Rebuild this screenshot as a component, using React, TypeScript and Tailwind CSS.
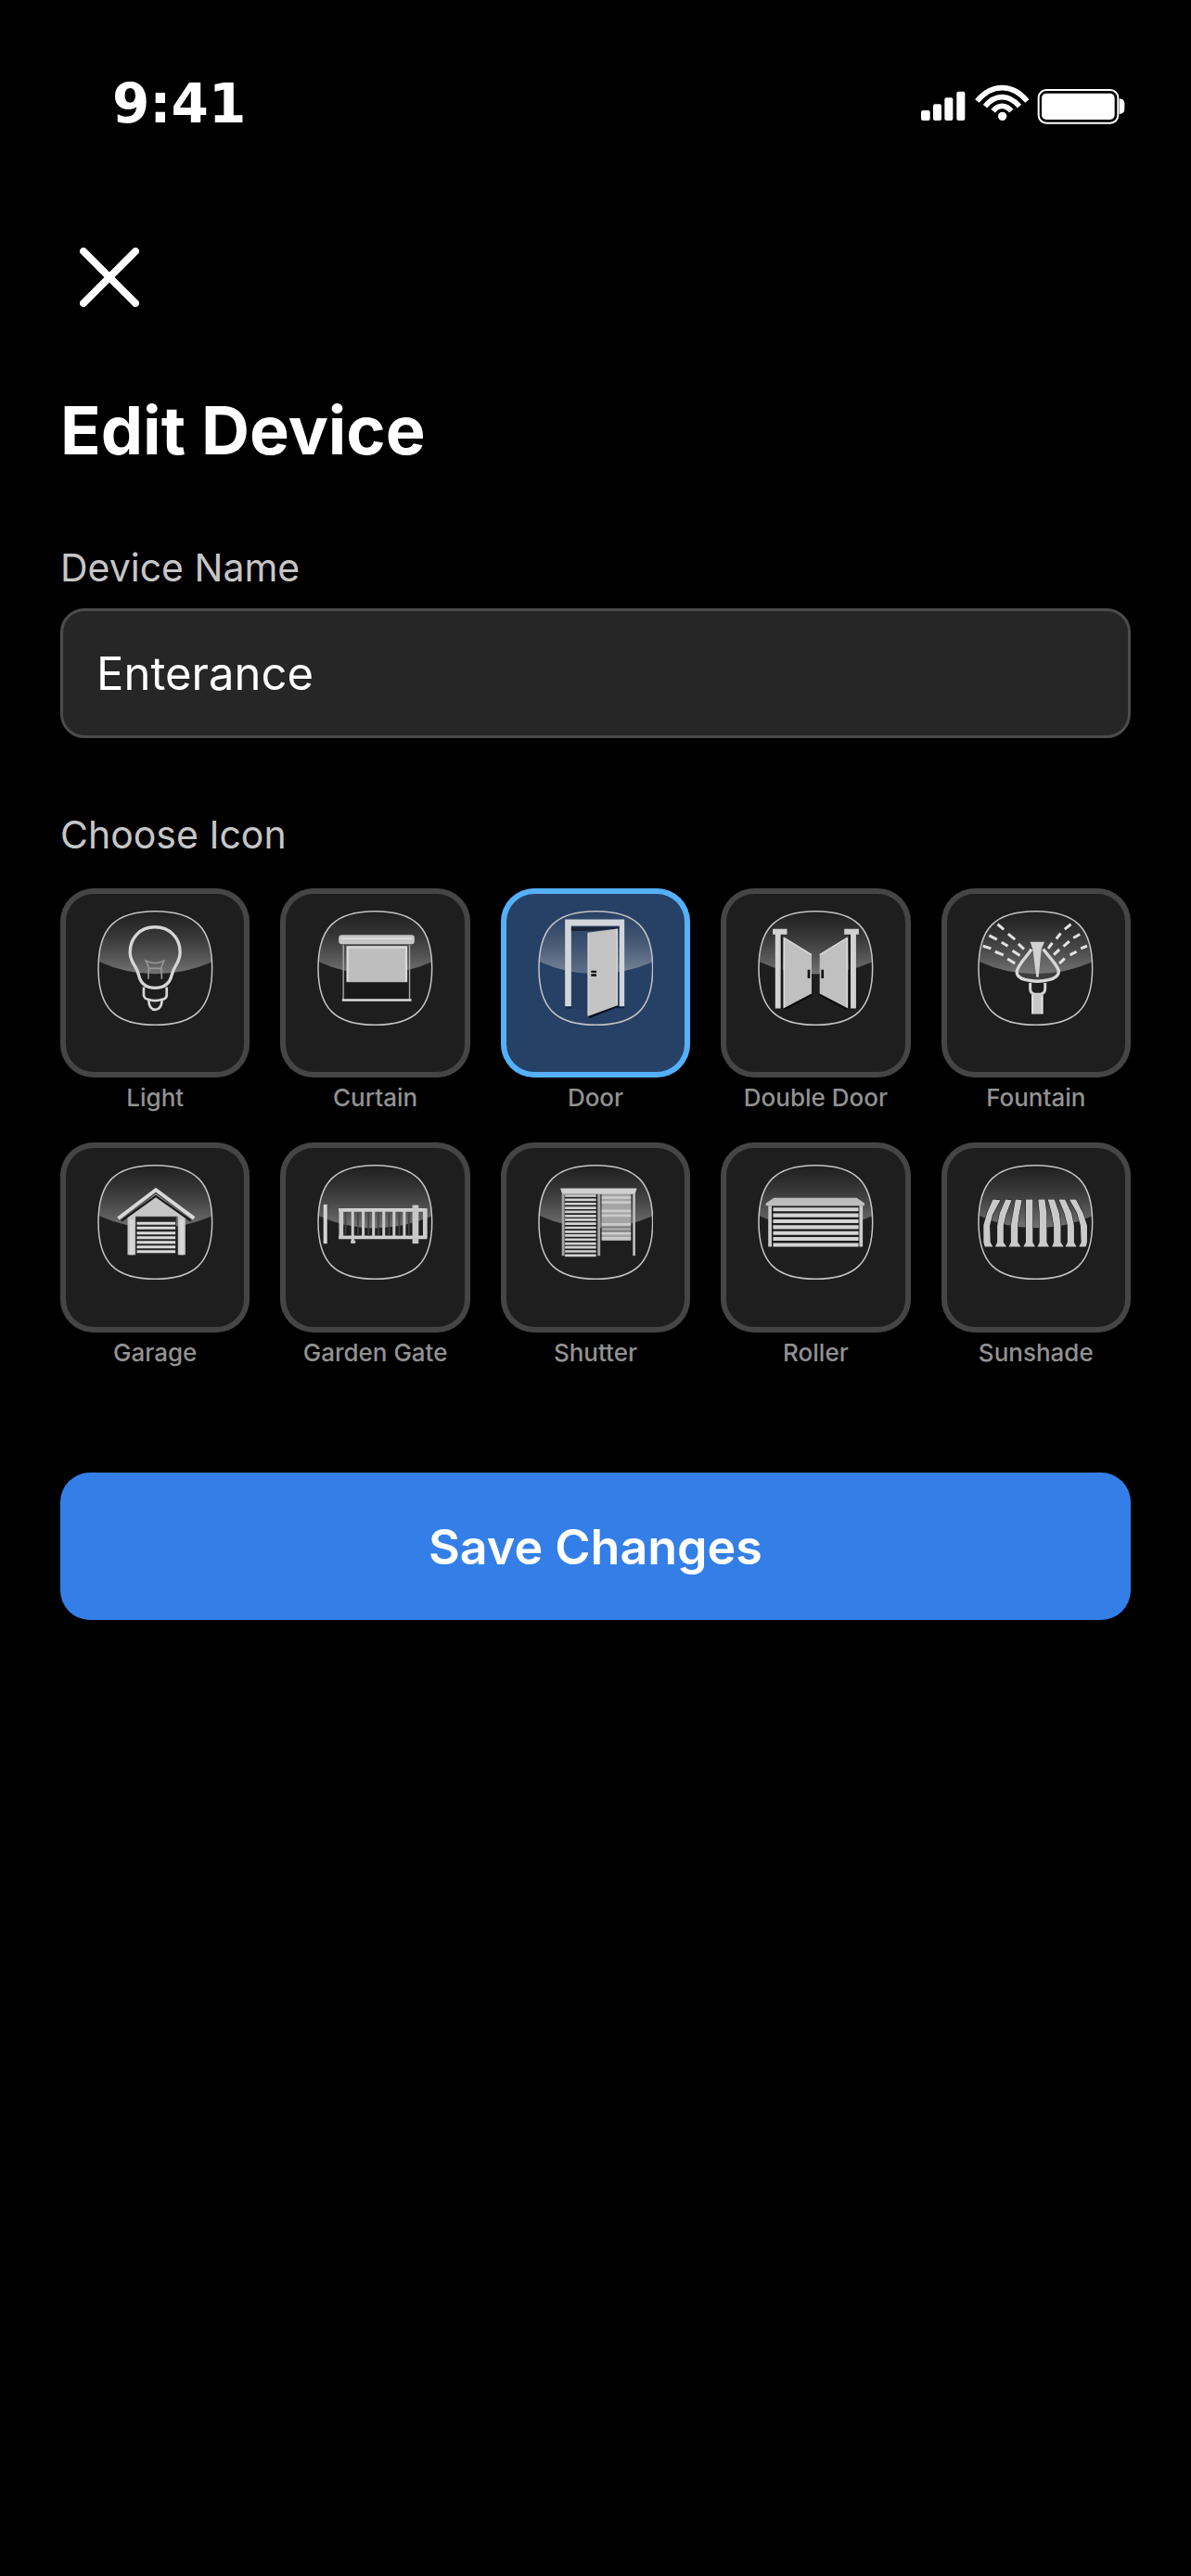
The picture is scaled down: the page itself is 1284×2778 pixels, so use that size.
import { useId, useState } from "react";
import type { ReactNode } from "react";

const SQUIRCLE =
  "M321 96C450 96 504 150 504 279S450 462 321 462S138 408 138 279S192 96 321 96Z";

function Glass({ children }: { children: ReactNode }) {
  const id = useId();
  return (
    <svg viewBox="135 91 372 376" className="w-[61%] shrink-0" aria-hidden="true">
      <defs>
        <linearGradient id={`${id}g`} x1="0" y1="0" x2="0" y2="1">
          <stop offset="0" stopColor="#000" stopOpacity="0.1" />
          <stop offset="0.15" stopColor="#888" stopOpacity="0.08" />
          <stop offset="1" stopColor="#ddd" stopOpacity="0.45" />
        </linearGradient>
        <clipPath id={`${id}c`}>
          <path d={SQUIRCLE} />
        </clipPath>
      </defs>
      <path
        d="M130 90H512V256Q420 298 321 298T130 254Z"
        fill={`url(#${id}g)`}
        clipPath={`url(#${id}c)`}
      />
      <path d={SQUIRCLE} fill="none" stroke="#c4c4c4" strokeWidth="4.5" />
      {children}
    </svg>
  );
}

function LightIcon() {
  return (
    <Glass>
      <g fill="none" stroke="#d6d6d6" strokeLinejoin="round">
        <path
          strokeWidth="10"
          d="M320 147C272 147 240 182 240 228C240 262 262 272 268 302C274 328 290 343 320 343S368 328 374 302C380 272 401 262 401 228C401 182 368 147 320 147Z"
        />
        <path strokeWidth="8" d="M284 340V366Q286 378 298 380Q320 388 344 380Q357 378 358 366V340" />
        <path strokeWidth="8" d="M300 384Q302 413 321 413T343 384" />
      </g>
      <path
        d="M299 314L300 276L291 256Q320 270 349 256L341 276L342 314M300 280H341"
        fill="none"
        stroke="#969696"
        strokeWidth="5"
      />
    </Glass>
  );
}

function CurtainIcon() {
  return (
    <Glass>
      <rect x="204" y="172" width="244" height="30" rx="10" fill="#c6c6c6" />
      <path d="M212 184H440" stroke="#dedede" strokeWidth="5" />
      <path d="M219 204V380M432 204V380" stroke="#aaa" strokeWidth="4" />
      <rect x="229" y="208" width="196" height="117" fill="#bebebe" />
      <path d="M230 212H424M233 212V322M421 212V322" stroke="#dadada" strokeWidth="6" />
      <rect x="226" y="325" width="200" height="52" fill="#1a1a1a" />
      <path d="M215 382H438" stroke="#dedede" strokeWidth="7" />
    </Glass>
  );
}

function DoorIcon() {
  return (
    <Glass>
      <path d="M241 143H398V160L300 168V410H241Z" fill="#1b2f52" fillOpacity="0.25" />
      <path d="M222 122H413V403H397V143H242V403H222Z" fill="#d2d5da" />
      <path d="M242 147H396V152L295 160H242Z" fill="#1b2436" />
      <path d="M222 403H242V409H226ZM388 403H413V408H388Z" fill="#10203c" />
      <path d="M295 434L389 398L396 403L302 440Z" fill="#0a1120" />
      <path d="M295 165L391 152V399L295 434Z" fill="#c4c3c3" />
      <path d="M297 166V430M389 153V398" stroke="#dad8d6" strokeWidth="4" />
      <path d="M306 287H323V294H306ZM306 298H323V306H306Z" fill="#151515" />
    </Glass>
  );
}

function DoubleDoorIcon() {
  return (
    <Glass>
      <g fill="#d2d2d2">
        <path d="M183 153H229V171H209V409H191V171H183Z" />
        <path d="M413 153H460V171H451V409H433V171H413Z" />
      </g>
      <path d="M212 172V410M430 172V410" stroke="#161616" strokeWidth="6" />
      <path d="M217 409L308 361V368L224 413ZM425 409L334 361V368L418 413Z" fill="#0c0c0c" />
      <path d="M217 178L308 235V361L217 409Z" fill="#c0c0c0" />
      <path d="M425 178L334 235V361L425 409Z" fill="#c0c0c0" />
      <path
        d="M220 182V405M220 182L308 236M422 182V405M422 182L334 236"
        stroke="#dadada"
        strokeWidth="4"
      />
      <path d="M299 284V312M343 284V312" stroke="#111" strokeWidth="8" />
    </Glass>
  );
}

function FountainIcon() {
  return (
    <Glass>
      <path
        d="M199 138L219 155M233 169L255 187M266 201L284 218M172 174L197 187M212 196L232 208M247 223L271 239M152 208L178 216M191 226L218 237M231 249L255 264M435 138L415 154M402 167L388 185M375 198L362 216M464 170L443 182M430 193L411 209M398 219L380 236M487 208L467 216M453 226L432 237M415 248L398 264"
        stroke="#e2e2e2"
        strokeWidth="9"
      />
      <path
        d="M308 218C292 244 268 264 261 289C259 306 274 313 290 317Q328 326 364 317C382 313 396 304 396 289C390 264 361 240 346 218"
        fill="#777"
        fillOpacity="0.35"
        stroke="#d8d8d8"
        strokeWidth="10"
      />
      <path d="M304 195H350L340 218L331 308H324L312 218Z" fill="#d2d2d2" />
      <path d="M304 327V345Q304 361 318 363H337Q352 361 352 345V327" fill="none" stroke="#d2d2d2" strokeWidth="9" />
      <path d="M308 364H346V427H308Z" fill="#c8c8c8" />
      <path d="M312 368V425M342 368V425" stroke="#e4e4e4" strokeWidth="4" />
    </Glass>
  );
}

function GarageIcon() {
  return (
    <Glass>
      <path d="M323 188L418 258V384H394V260H258V384H232V258Z" fill="#c6c6c6" />
      <path d="M245 270V384M406 270V384" stroke="#d6d6d6" strokeWidth="14" />
      <path d="M258 262H388V384H258Z" fill="#242424" />
      <path
        d="M262 283H386M262 298H386M262 314H386M262 329H386M262 344H386M262 359H386M262 374H386"
        stroke="#dadada"
        strokeWidth="9"
      />
      <path d="M212 275L323 195L436 275" fill="none" stroke="#181818" strokeWidth="7" />
      <path d="M202 267L323 175L446 267" fill="none" stroke="#d8d8d8" strokeWidth="12" />
    </Glass>
  );
}

function GardenGateIcon() {
  return (
    <Glass>
      <path d="M161 222V348" stroke="#d2d2d2" strokeWidth="12" />
      <path d="M204 240H487M204 328H487" stroke="#d0d0d0" strokeWidth="11" />
      <path d="M212 236V332M482 236V332" stroke="#cacaca" strokeWidth="14" />
      <path
        d="M249 240V346M283 242V326M316 242V326M349 242V326M382 242V326M415 242V326"
        stroke="#cacaca"
        strokeWidth="9"
      />
      <path d="M226 246V322M266 248V322M300 248V322M332 248V322M366 248V322M399 248V322M430 248V322" stroke="#444" strokeWidth="5" />
      <path d="M451 224V348" stroke="#c8c8c8" strokeWidth="20" />
      <path d="M243 338H258V347H243Z" fill="#c8c8c8" />
    </Glass>
  );
}

function ShutterIcon() {
  return (
    <Glass>
      <path d="M216 188H334V390H216Z" fill="#202020" />
      <path
        d="M222 194H322M222 207H322M222 220H322M222 233H322M222 246H322M222 259H322M222 271H322M222 284H322M222 297H322M222 310H322M222 322H322M222 335H322M222 348H322M222 360H322M222 373H322M222 386H322"
        stroke="#d2d2d2"
        strokeWidth="8"
      />
      <path d="M216 188V387M331 188V387" stroke="#a2a2a2" strokeWidth="9" />
      <path d="M340 188H434V339H340Z" fill="#a4a4a4" />
      <path
        d="M340 200H434M340 215H434M340 243H434M340 258H434M340 286H434M340 315H434M340 331H434"
        stroke="#cbcbcb"
        strokeWidth="8"
      />
      <path d="M340 308H434M340 295H434" stroke="#666" strokeWidth="3" />
      <path d="M444 188V387" stroke="#bdbdbd" strokeWidth="8" />
      <path d="M207 170H453L447 189H213Z" fill="#d0d0d0" />
    </Glass>
  );
}

function RollerIcon() {
  return (
    <Glass>
      <path d="M168 228H472V358H168Z" fill="#1c1c1c" />
      <path
        d="M184 238H459M184 257H459M184 276H459M184 295H459M184 314H459M184 333H459M184 352H459"
        stroke="#d4d4d4"
        strokeWidth="12"
      />
      <path d="M174 226V358M467 226V358" stroke="#cecece" strokeWidth="11" />
      <path d="M187 201H453L478 218V226H161V218Z" fill="#bebebe" />
    </Glass>
  );
}

const SUNSHADE_STRIPES = [
  "M184 206L208 208L183 255L174 290L176 344L184 358H158L154 344V288L166 248Z",
  "M225 206L244 208L226 255L218 290V344L228 358H191L198 344V290L206 250Z",
  "M257 206L277 208L268 255L264 290V344L274 358H235L242 344V290L249 250Z",
  "M290 206H312V344L320 358H282L290 344Z",
  "M330 206H351L357 250V344L365 358H327L334 344V250Z",
  "M361 206H382L397 250L402 290V344L412 358H374L380 344V290L373 250Z",
  "M396 206H416L437 250L445 290V344L453 358H417L424 344V290L414 250Z",
  "M430 206H451L474 250L487 290V344L483 358H461L468 344L466 290L455 250Z",
];

function SunshadeIcon() {
  return (
    <Glass>
      {SUNSHADE_STRIPES.map((d) => (
        <path key={d} d={d} fill="#cacaca" stroke="#161616" strokeWidth="3" paintOrder="stroke" />
      ))}
    </Glass>
  );
}

const ICONS: { name: string; Icon: () => ReactNode }[] = [
  { name: "Light", Icon: LightIcon },
  { name: "Curtain", Icon: CurtainIcon },
  { name: "Door", Icon: DoorIcon },
  { name: "Double Door", Icon: DoubleDoorIcon },
  { name: "Fountain", Icon: FountainIcon },
  { name: "Garage", Icon: GarageIcon },
  { name: "Garden Gate", Icon: GardenGateIcon },
  { name: "Shutter", Icon: ShutterIcon },
  { name: "Roller", Icon: RollerIcon },
  { name: "Sunshade", Icon: SunshadeIcon },
];

function StatusBar() {
  return (
    <header className="flex items-center justify-between pt-[74px] pr-[71px] pl-[121px]">
      <time className="font-['DejaVu_Sans'] text-[58px] leading-[76px] font-bold">9:41</time>
      <svg viewBox="98 60 660 138" className="h-[46px] w-[220px]" fill="#fff" aria-hidden="true">
        <rect x="98" y="150" width="29" height="33" rx="6" />
        <rect x="137" y="130" width="27" height="53" rx="6" />
        <rect x="174" y="109" width="27" height="74" rx="6" />
        <rect x="213" y="89" width="27" height="94" rx="6" />
        <g fill="none" stroke="#fff" strokeWidth="17">
          <path d="M279 120Q315 77 360 77T441 120" />
          <path d="M305 137Q330 107 360 107T416 137" />
          <path d="M331 152Q344 136 360 136T390 152" />
        </g>
        <circle cx="361" cy="169" r="14" />
        <rect x="478" y="84" width="257" height="107" rx="25" fill="none" stroke="#fff" strokeWidth="6" />
        <rect x="488" y="95" width="236" height="85" rx="15" />
        <path d="M739 112Q756 114 756 127V147Q756 160 739 162Z" />
      </svg>
    </header>
  );
}

export default function App() {
  const [name, setName] = useState("Enterance");
  const [selected, setSelected] = useState("Door");

  return (
    <div className="min-h-screen bg-black font-[Inter,sans-serif] text-white">
      <StatusBar />
      <main className="px-[65px]">
        <button
          type="button"
          aria-label="Close"
          className="mt-24 flex size-[106px] items-center justify-center"
        >
          <svg viewBox="0 0 64 64" className="size-16" fill="none" stroke="#fff" strokeWidth="8" strokeLinecap="round" aria-hidden="true">
            <path d="M4 4L60 60M60 4L4 60" />
          </svg>
        </button>

        <h1 className="mt-[68px] text-[72px] leading-[88px] font-bold">Edit Device</h1>

        <form onSubmit={(event) => event.preventDefault()}>
          <label htmlFor="device-name" className="mt-20 block text-[41px] leading-[48px] text-[#c6c6c6]">
            Device Name
          </label>
          <input
            id="device-name"
            type="text"
            value={name}
            onChange={(event) => setName(event.target.value)}
            className="mt-5 block h-[140px] w-full rounded-[26px] border-3 border-[#4c4c4c] bg-[#262626] px-9 text-[49px] text-white outline-none"
          />

          <h2 id="icon-heading" className="mt-20 text-[41px] leading-[48px] text-[#c6c6c6]">
            Choose Icon
          </h2>
          <div role="group" aria-labelledby="icon-heading" className="mt-[34px] grid grid-cols-5 gap-[33px]">
            {ICONS.map(({ name: label, Icon }) => {
              const active = label === selected;
              return (
                <button
                  key={label}
                  type="button"
                  aria-pressed={active}
                  onClick={() => setSelected(label)}
                  className="flex flex-col items-center gap-1.5"
                >
                  <span
                    className={
                      active
                        ? "flex aspect-square w-full items-start justify-center rounded-[36px] ring-6 ring-inset ring-[#55b0fb] bg-[#274166] pt-[23px]"
                        : "flex aspect-square w-full items-start justify-center rounded-[36px] ring-6 ring-inset ring-[#454545] bg-[#1e1e1e] pt-[23px]"
                    }
                  >
                    <Icon />
                  </span>
                  <span className="text-[26px] leading-[31px] font-medium whitespace-nowrap text-[#929292]">{label}</span>
                </button>
              );
            })}
          </div>

          <button
            type="submit"
            className="mt-[114px] flex h-[159px] w-full items-center justify-center rounded-[32px] bg-[#347fe7] pt-1 text-[52px] font-semibold"
          >
            Save Changes
          </button>
        </form>
      </main>
    </div>
  );
}
